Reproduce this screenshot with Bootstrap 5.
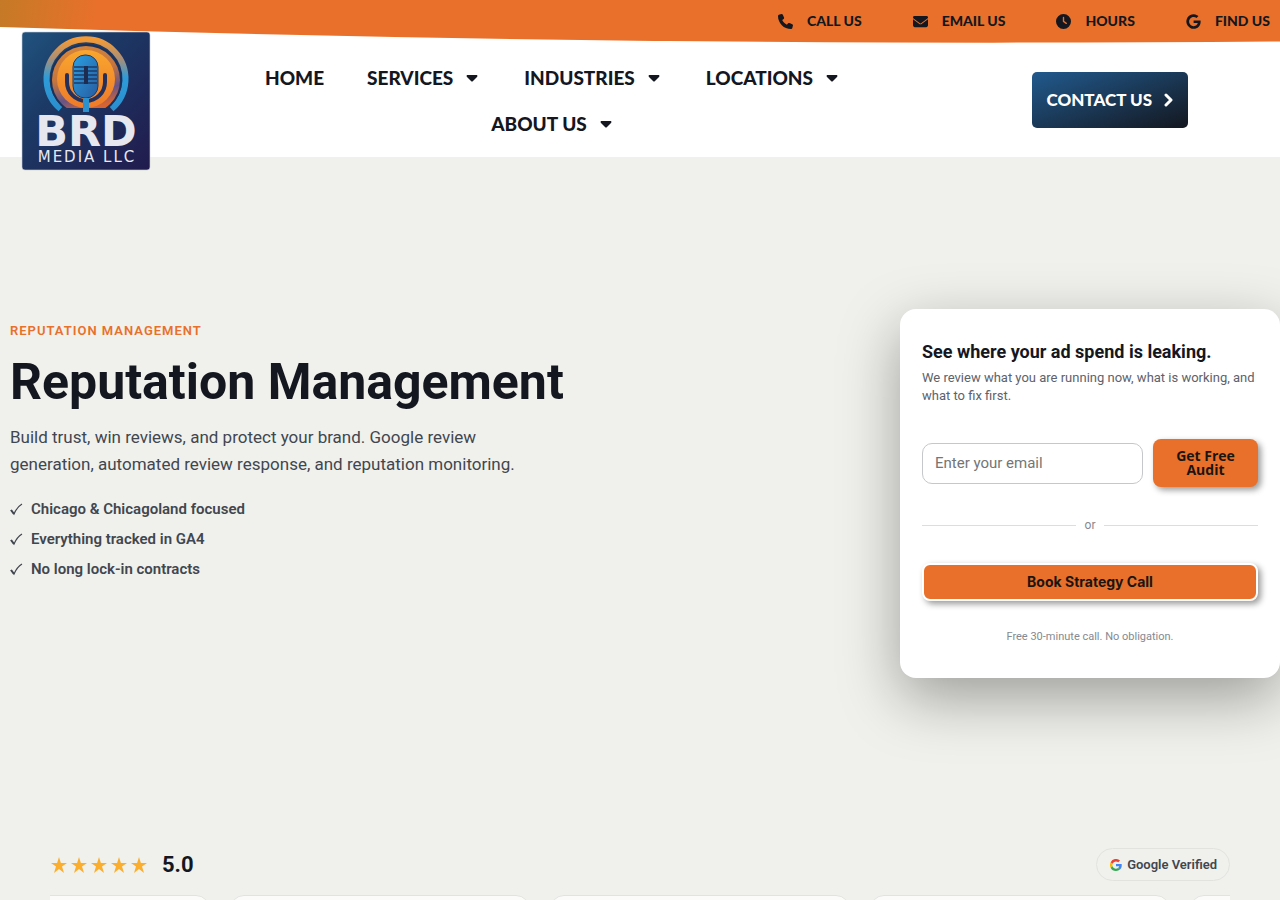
<!DOCTYPE html>
<html lang="en">
<head>
<meta charset="utf-8">
<meta name="viewport" content="width=device-width, initial-scale=1">
<title>Reputation Management | BRD Media LLC</title>
<link href="https://cdn.jsdelivr.net/npm/bootstrap@5.3.0/dist/css/bootstrap.min.css" rel="stylesheet">
<style>
  :root { --orange: #e8702a; --ink: #14171f; --slate: #41464f; --paper: #f0f1ec; }
  body { background: var(--paper); color: var(--ink); font-family: Roboto, "Liberation Sans", sans-serif; }
  a { color: inherit; text-decoration: none; }
  .site-head { background: #fff; min-height: 157px; }
  .swoosh { position: absolute; top: 0; left: 0; width: 100%; height: 43px; }
  .topbar { min-height: 42px; gap: 51px; padding-right: 10px; font: 900 14px/20px Lato, sans-serif; }
  .topbar a { display: flex; align-items: center; gap: 14px; }
  .topbar svg { width: 15px; height: 15px; }
  .logo { position: absolute; top: 31px; left: 21px; z-index: 2; }
  .main-nav { width: 620px; gap: 0 43px; margin-left: 243px; font: 900 19px/46px Lato, sans-serif; padding: 13px 0 10px; }
  .main-nav a { display: flex; align-items: center; gap: 10px; }
  .btn-contact { background: linear-gradient(160deg, #215a8e, #14171f); border-radius: 5px; color: #fff; font: 900 17px/24px Lato, sans-serif; padding: 16px 14px; border: 0; gap: 12px; margin-right: 92px; }
  .hero { min-height: 673px; }
  .hero-text { padding: 12px 0 0 10px; }
  .eyebrow { color: var(--orange); font-size: 13px; line-height: 20px; font-weight: 600; letter-spacing: 1px; }
  .hero h1 { font-size: 50px; line-height: 56px; font-weight: 700; margin: 13px 0 14px; }
  .hero-copy { color: var(--slate); font-size: 17px; line-height: 27px; max-width: 530px; margin-bottom: 20px; }
  .ticks { color: var(--slate); font-size: 15px; line-height: 22px; font-weight: 600; gap: 8px; }
  .ticks svg { width: 13px; height: 14px; margin-right: 8px; }
  .audit { width: 380px; background: #fff; border-radius: 16px; padding: 30px 22px 33px; box-shadow: 0 20px 60px rgba(0,0,0,.35); }
  .audit h2 { font-size: 18px; line-height: 26px; font-weight: 700; margin-bottom: 4px; }
  .audit-copy { color: #5d626b; font-size: 13px; line-height: 18px; margin-bottom: 34px; }
  .email-row { gap: 10px; }
  .audit .form-control { height: 41px; border: 1px solid #c5c7ca; border-radius: 10px; font-size: 15px; padding: 0 12px; }
  .audit .form-control::placeholder { color: #757575; }
  .btn-brand { background: var(--orange); color: #1b1512; box-shadow: 3px 3px 6px rgba(0,0,0,.4); border-radius: 8px; }
  .btn-audit { flex: 0 0 105px; height: 48px; font: 700 14px/14px "Open Sans", sans-serif; border: 0; padding: 0 16px; }
  .btn-book { height: 38px; font: 700 14px/20px Inter, sans-serif; border: 2px solid #fff; padding: 0; }
  .or-line { color: #858991; font-size: 12px; line-height: 18px; gap: 9px; margin: 29px 0 29px; }
  .or-line span:empty { height: 1px; background: #dcdddf; flex: 1; }
  .note { color: #858991; font-size: 11px; line-height: 16px; margin: 28px 0 0; }
  .reviews { padding: 18px 50px 0; }
  .stars { color: #fbad2d; gap: 4px; padding-left: 1px; }
  .stars svg { width: 16px; height: 16px; }
  .score { font-size: 22px; line-height: 32px; font-weight: 700; margin-left: 15px; }
  .verified { border: 1px solid #e2e3df; border-radius: 17px; height: 33px; padding: 0 12px 0 13px; font-size: 13px; font-weight: 600; color: var(--slate); gap: 5px; }
  .track { flex: 1 1 0; min-height: 0; overflow: hidden; gap: 20px; margin-top: 14px; }
  .review { flex: 0 0 300px; height: 220px; border: 1px solid #e2e3df; border-radius: 14px; background: #fbfbfa; }
  .review:first-child { margin-left: -140px; }
</style>
</head>
<body class="d-flex flex-column min-vh-100">
<header class="site-head position-relative">
  <svg class="swoosh" viewBox="0 0 1280 43" preserveAspectRatio="none" aria-hidden="true">
    <defs><linearGradient id="bar" gradientUnits="userSpaceOnUse" x1="0" y1="0" x2="95" y2="14"><stop stop-color="#c57a26"/><stop offset="1" stop-color="#e8702a"/></linearGradient></defs>
    <path fill="url(#bar)" d="M0 0H1280V41.500Q1100 43 890 42.500Q440 41 0 27Z"/>
  </svg>
  <a class="logo" href="#" aria-label="BRD Media LLC">
    <svg class="d-block" width="130" height="140" viewBox="0 0 130 140">
      <defs>
        <linearGradient id="lbg" x1="0" y1="0" x2="1" y2="1"><stop stop-color="#20537f"/><stop offset=".35" stop-color="#1c3a66"/><stop offset="1" stop-color="#211b4d"/></linearGradient>
        <linearGradient id="ring" x1="0" y1="0" x2="0" y2="1"><stop stop-color="#f59a35"/><stop offset=".28" stop-color="#a98f78"/><stop offset=".55" stop-color="#2e9bd8"/><stop offset="1" stop-color="#2b8fce"/></linearGradient>
        <linearGradient id="glow" x1="0" y1="0" x2=".3" y2="1"><stop stop-color="#d9893c"/><stop offset=".5" stop-color="#c5753d"/><stop offset=".8" stop-color="#675488"/><stop offset="1" stop-color="#d56432"/></linearGradient>
        <linearGradient id="sun" x1="0" y1="0" x2="0" y2="1"><stop stop-color="#f9a62f"/><stop offset="1" stop-color="#ee7a29"/></linearGradient>
        <linearGradient id="mic" x1="0" y1="0" x2="1" y2="1"><stop stop-color="#29a0e2"/><stop offset="1" stop-color="#285b9f"/></linearGradient>
        <clipPath id="above"><rect width="130" height="77"/></clipPath>
      </defs>
      <rect x="1" y="1" width="128" height="138" rx="3" fill="url(#lbg)" stroke="#c9ccd4" stroke-width=".6"/>
      <path d="M39.500 78A39.500 39.500 0 1 1 90.500 78" fill="none" stroke="url(#ring)" stroke-width="6"/>
      <g clip-path="url(#above)">
        <circle cx="65" cy="49" r="36" fill="#1c3158"/>
        <circle cx="65" cy="49" r="34" fill="url(#glow)"/>
        <circle cx="65" cy="48" r="29" fill="url(#sun)"/>
      </g>
      <path d="M46 44V51A19 19 0 0 0 84 51V44" fill="none" stroke="#25315a" stroke-width="4" stroke-linecap="round"/>
      <rect x="52" y="24" width="25" height="43" rx="12" fill="url(#mic)" stroke="#1d3b68"/>
      <path d="M53 36H76M53 40H76M53 44H76M53 48H76M53 52H76" stroke="#1d3b68" stroke-width="1.500"/>
      <path d="M65 35V53" stroke="#1d2c50" stroke-width="4"/>
      <path d="M62 67H68V81H62Z" fill="#2c92cf"/>
      <g fill="#e7e8ef" text-anchor="middle" font-family="'DejaVu Sans', sans-serif">
        <text x="65" y="115" font-size="43" font-weight="700">BRD</text>
        <text x="66" y="131" font-size="15" letter-spacing="2">MEDIA LLC</text>
      </g>
    </svg>
  </a>
  <div class="topbar position-relative d-flex justify-content-end">
    <a href="#"><svg viewBox="0 0 512 512" fill="currentColor"><path d="M165 25c-8-19-29-29-48-23L29 26C12 30 0 46 0 64c0 247 201 448 448 448 18 0 34-12 38-29l24-88c6-20-4-41-23-48l-96-40c-16-7-35-2-46 11l-41 50c-70-33-127-90-160-160l50-41c13-11 18-30 11-46z"/></svg>CALL US</a>
    <a href="#"><svg viewBox="0 0 512 512" fill="currentColor"><path d="M48 64a48 48 0 0 0-29 86l218 164c11 8 27 8 38 0l218-164a48 48 0 0 0-29-86zM0 176v208c0 35 29 64 64 64h384c35 0 64-29 64-64V176L294 339c-22 17-54 17-76 0z"/></svg>EMAIL US</a>
    <a href="#"><svg viewBox="0 0 512 512" fill="currentColor"><path fill-rule="evenodd" d="M256 0a256 256 0 1 1 0 512 256 256 0 0 1 0-512zm-24 120v136c0 8 4 15 11 20l96 64c11 7 26 4 33-7s4-26-7-33l-85-57V120c0-13-11-24-24-24s-24 11-24 24z"/></svg>HOURS</a>
    <a href="#"><svg viewBox="0 0 488 512" fill="currentColor"><path d="M488 262c0 141-97 242-240 242A248 248 0 1 1 414 72l-67 65C259 52 95 116 95 256c0 87 70 158 153 158 98 0 134-70 140-106H248v-85h236c2 12 4 25 4 39z"/></svg>FIND US</a>
  </div>
  <div class="d-flex align-items-center justify-content-between">
    <nav class="main-nav d-flex flex-wrap justify-content-center" aria-label="Main">
      <a href="#">HOME</a>
      <a href="#">SERVICES<svg width="18" height="7" viewBox="0 0 18 7"><path d="M4 0H14Q15 1 14 2L10 6Q9 7 8 6L4 2Q3 1 4 0Z" fill="currentColor"/></svg></a>
      <a href="#">INDUSTRIES<svg width="18" height="7" viewBox="0 0 18 7"><path d="M4 0H14Q15 1 14 2L10 6Q9 7 8 6L4 2Q3 1 4 0Z" fill="currentColor"/></svg></a>
      <a href="#">LOCATIONS<svg width="18" height="7" viewBox="0 0 18 7"><path d="M4 0H14Q15 1 14 2L10 6Q9 7 8 6L4 2Q3 1 4 0Z" fill="currentColor"/></svg></a>
      <a href="#">ABOUT US<svg width="18" height="7" viewBox="0 0 18 7"><path d="M4 0H14Q15 1 14 2L10 6Q9 7 8 6L4 2Q3 1 4 0Z" fill="currentColor"/></svg></a>
    </nav>
    <a class="btn btn-contact d-flex align-items-center" href="#">CONTACT US<svg width="10" height="16" viewBox="0 0 10 16" fill="none" stroke="currentColor" stroke-width="3" stroke-linecap="round" stroke-linejoin="round"><path d="M2 3L7 8L2 13"/></svg></a>
  </div>
</header>
<main class="d-flex flex-column flex-fill">
  <section class="hero d-flex align-items-center">
    <div class="d-flex flex-fill align-items-start justify-content-between">
    <div class="hero-text">
      <div class="eyebrow">REPUTATION MANAGEMENT</div>
      <h1>Reputation Management</h1>
      <p class="hero-copy">Build trust, win reviews, and protect your brand. Google review generation, automated review response, and reputation monitoring.</p>
      <ul class="ticks list-unstyled d-flex flex-column mb-0">
        <li><svg viewBox="0 0 13 14" fill="none" stroke="currentColor"><path d="M1 7L4 11Q7 4 12 1" stroke-width="1.200"/><path d="M1 7L4 11" stroke-width="2"/></svg>Chicago &amp; Chicagoland focused</li>
        <li><svg viewBox="0 0 13 14" fill="none" stroke="currentColor"><path d="M1 7L4 11Q7 4 12 1" stroke-width="1.200"/><path d="M1 7L4 11" stroke-width="2"/></svg>Everything tracked in GA4</li>
        <li><svg viewBox="0 0 13 14" fill="none" stroke="currentColor"><path d="M1 7L4 11Q7 4 12 1" stroke-width="1.200"/><path d="M1 7L4 11" stroke-width="2"/></svg>No long lock-in contracts</li>
      </ul>
    </div>
    <form class="audit">
      <h2>See where your ad spend is leaking.</h2>
      <p class="audit-copy">We review what you are running now, what is working, and what to fix first.</p>
      <div class="email-row d-flex align-items-center">
        <input class="form-control" type="email" placeholder="Enter your email" aria-label="Email">
        <button class="btn btn-brand btn-audit" type="submit">Get Free Audit</button>
      </div>
      <div class="or-line d-flex align-items-center"><span></span>or<span></span></div>
      <button class="btn btn-brand btn-book w-100 d-block" type="button">Book Strategy Call</button>
      <p class="note text-center">Free 30-minute call. No obligation.</p>
    </form>
    </div>
  </section>
  <section class="reviews d-flex flex-column flex-fill">
    <div class="d-flex justify-content-between align-items-center">
      <div class="d-flex align-items-center">
        <div class="stars d-flex" role="img" aria-label="5 stars">
          <svg viewBox="0 0 16 16" fill="currentColor"><path d="M8 0L9.900 6H16L11 9.600L13 16L8 12.100L3 16L5 9.600L0 6H6.100Z"/></svg>
          <svg viewBox="0 0 16 16" fill="currentColor"><path d="M8 0L9.900 6H16L11 9.600L13 16L8 12.100L3 16L5 9.600L0 6H6.100Z"/></svg>
          <svg viewBox="0 0 16 16" fill="currentColor"><path d="M8 0L9.900 6H16L11 9.600L13 16L8 12.100L3 16L5 9.600L0 6H6.100Z"/></svg>
          <svg viewBox="0 0 16 16" fill="currentColor"><path d="M8 0L9.900 6H16L11 9.600L13 16L8 12.100L3 16L5 9.600L0 6H6.100Z"/></svg>
          <svg viewBox="0 0 16 16" fill="currentColor"><path d="M8 0L9.900 6H16L11 9.600L13 16L8 12.100L3 16L5 9.600L0 6H6.100Z"/></svg>
        </div>
        <span class="score">5.0</span>
      </div>
      <div class="verified d-flex align-items-center">
        <svg width="12" height="12" viewBox="0 0 48 48"><path fill="#fbbc05" d="M10.500 28.600a14 14 0 0 1 0-9.200l-8-6.200a24 24 0 0 0 0 21.600z"/><path fill="#ea4335" d="M24 9.500c3.500 0 6.700 1.200 9.200 3.600l6.900-6.900A24 24 0 0 0 2.500 13.200l8 6.200C12.400 13.700 17.700 9.500 24 9.500z"/><path fill="#4285f4" d="M47 24.500c0-1.600-.2-3.100-.4-4.500H24v9h12.900c-.6 3-2.200 5.500-4.700 7.200l7.700 6c4.500-4.200 7.100-10.400 7.100-17.700z"/><path fill="#34a853" d="M24 48c6.500 0 11.900-2.100 15.900-5.800l-7.700-6A14.300 14.300 0 0 1 10.500 28.600l-8 6.200A24 24 0 0 0 24 48z"/></svg>
        Google Verified
      </div>
    </div>
    <div class="track d-flex">
      <article class="review"></article><article class="review"></article><article class="review"></article><article class="review"></article><article class="review"></article>
    </div>
  </section>
</main>
<script src="https://cdn.jsdelivr.net/npm/bootstrap@5.3.0/dist/js/bootstrap.bundle.min.js"></script>
</body>
</html>
